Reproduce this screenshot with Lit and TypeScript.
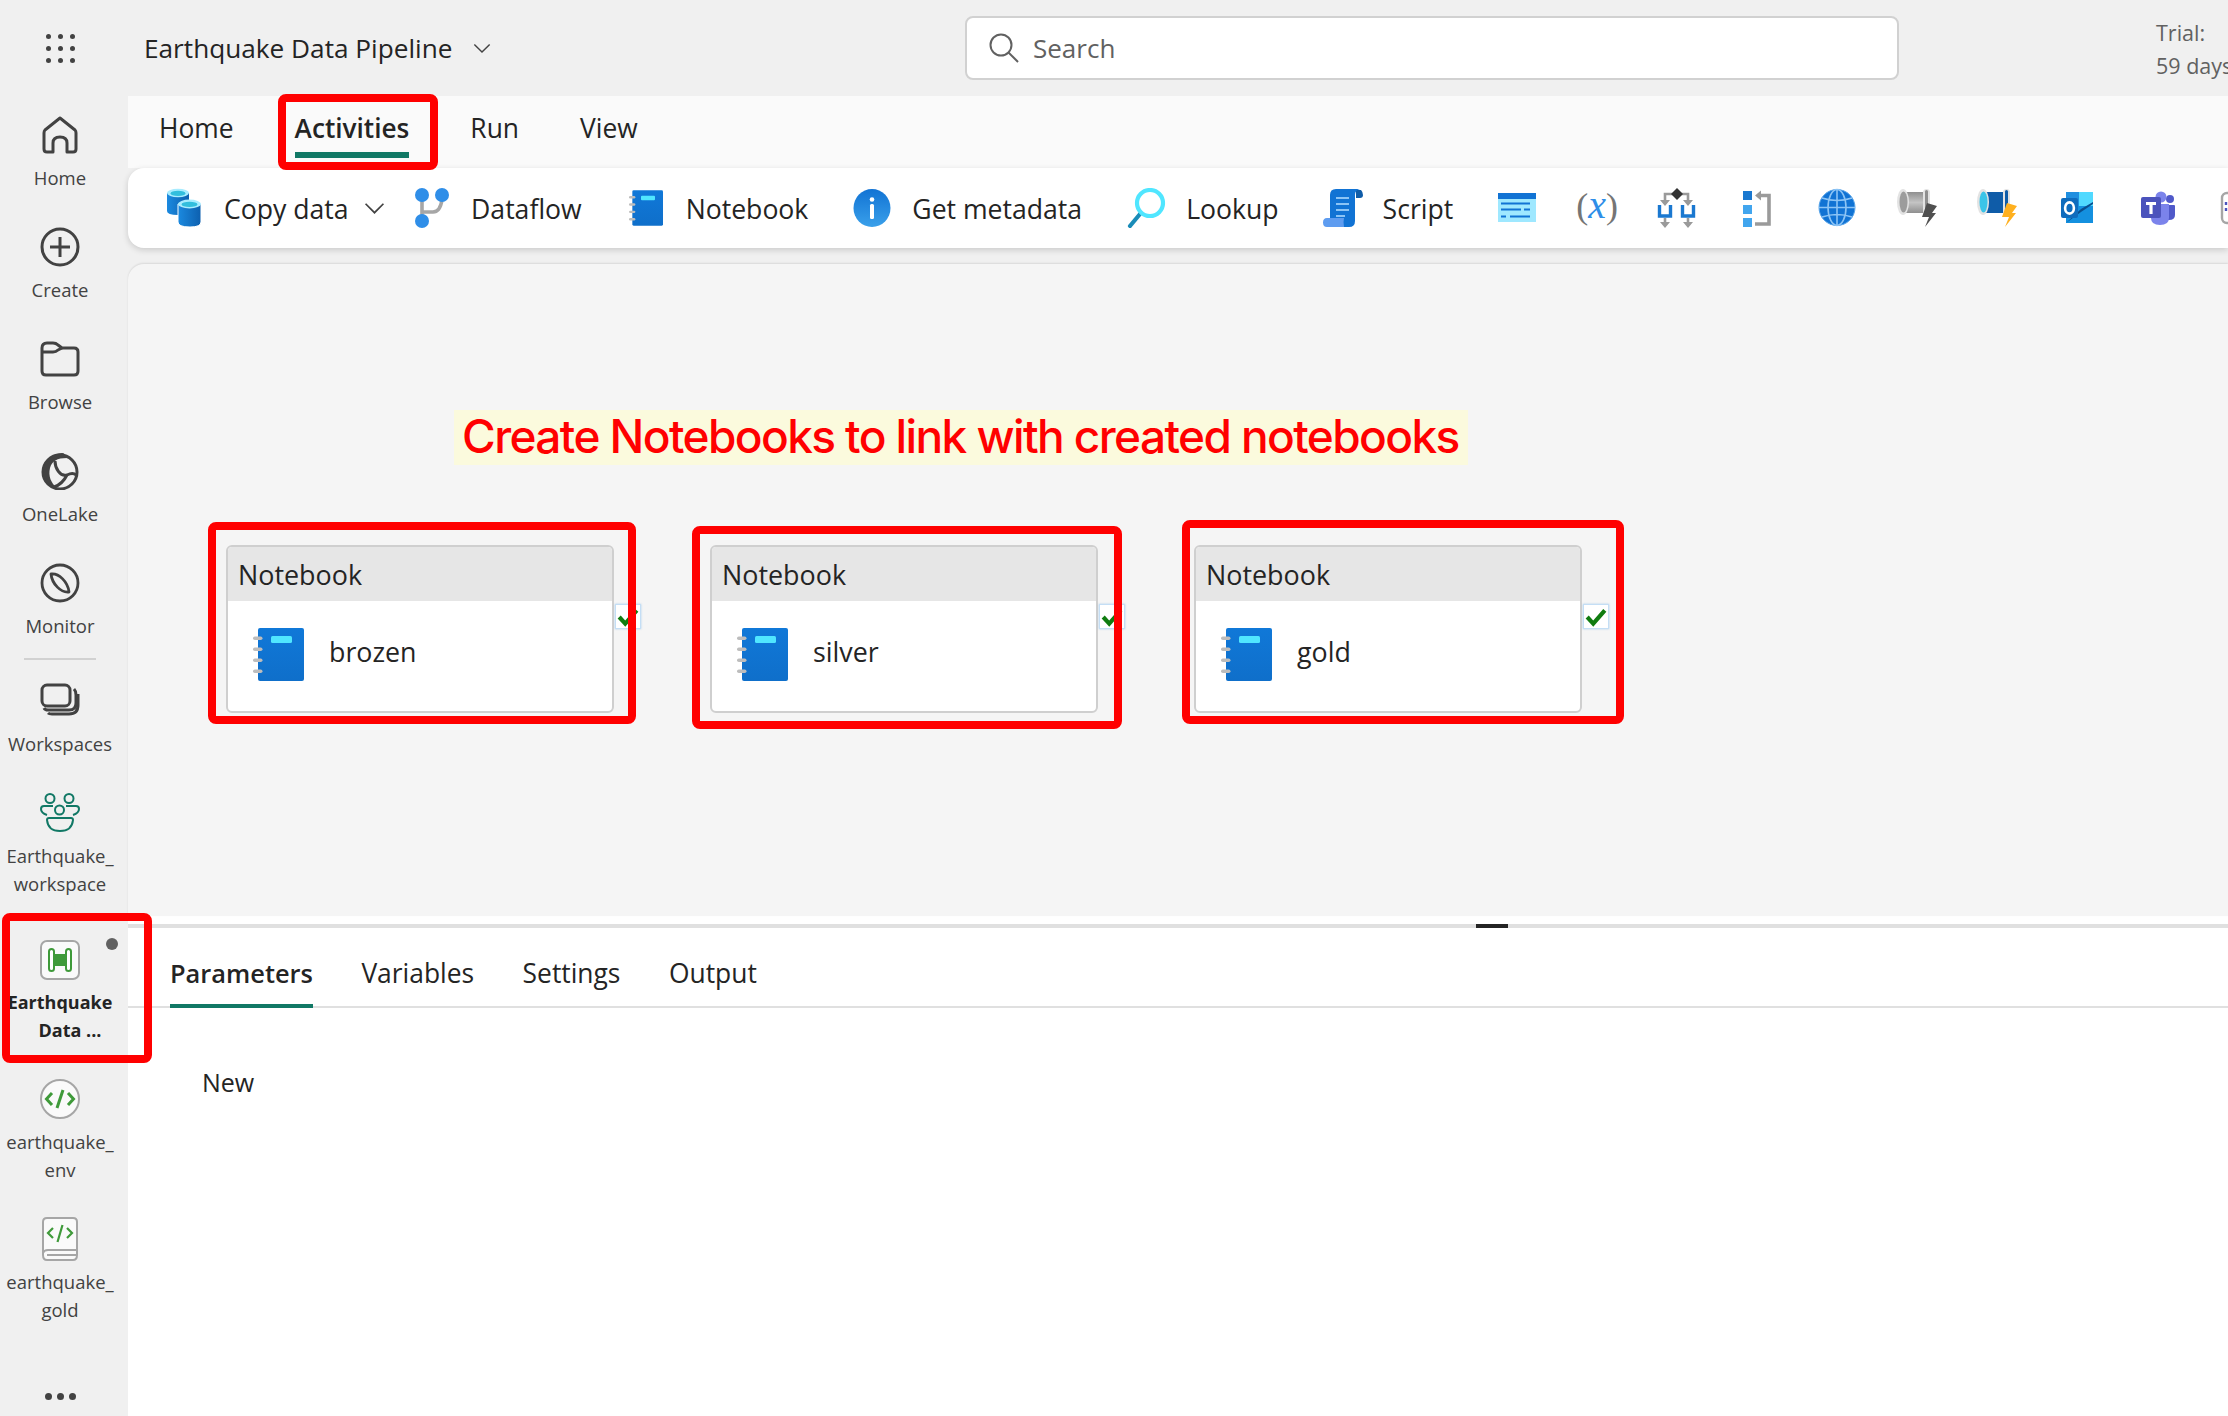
import { css, html, LitElement } from "lit";
import { customElement } from "lit/decorators.js";

// ---- sidebar icons ----
const homeIcon = html`<svg width="36" height="38" viewBox="0 0 36 38" fill="none" stroke="#424242" stroke-width="3" stroke-linejoin="round"><path d="M18 2 L3 14 Q2 15 2 17 V33 Q2 36 5 36 H11 V27 Q11 21 18 21 Q25 21 25 27 V36 H31 Q34 36 34 33 V17 Q34 15 33 14 Z"/></svg>`;
const createIcon = html`<svg width="40" height="40" viewBox="0 0 40 40" fill="none" stroke="#424242" stroke-width="3"><circle cx="20" cy="20" r="18"/><path d="M20 10 V30 M10 20 H30"/></svg>`;
const browseIcon = html`<svg width="40" height="36" viewBox="0 0 40 36" fill="none" stroke="#424242" stroke-width="3" stroke-linejoin="round"><path d="M2 7 Q2 2 7 2 H13 Q16 2 18 4 L22 7 H34 Q38 7 38 11 V30 Q38 34 34 34 H6 Q2 34 2 30 Z"/><path d="M2 11 H13 Q16 11 18 9 L22 7"/></svg>`;
const lakeIcon = html`<svg width="40" height="38" viewBox="0 0 40 38" fill="none" stroke="#424242" stroke-width="3"><circle cx="20" cy="20" r="17"/><path d="M22 1 C12 1 4 10 3 20 C3 29 9 35 17 36 C11 31 8 24 10 16 C12 9 17 6 27 6 C26 3 24 1 22 1 Z" fill="#424242" stroke="none"/><path d="M15 9 C15 16 20 25 27 23 C31 21 34 21 36 23 M14 35 C20 33 24 29 27 23"/></svg>`;
const monitorIcon = html`<svg width="40" height="40" viewBox="0 0 40 40" fill="none" stroke="#424242" stroke-width="2.8" stroke-linejoin="round"><circle cx="20" cy="20" r="18"/><path d="M11 11 C19 10 28 19 29 29 C21 30 12 21 11 11 Z"/></svg>`;
const workspacesIcon = html`<svg width="40" height="36" viewBox="0 0 40 36" fill="none" stroke="#424242" stroke-width="3"><rect x="2" y="2" width="28" height="21" rx="5"/><path d="M34 6 Q36 8 36 12 V20 Q36 27 29 27 H8 Q5 27 4 25"/><path d="M38 11 V22 Q38 31 29 31 H12 Q9 31 8 30"/></svg>`;
const peopleIcon = html`<svg width="40" height="40" viewBox="0 0 40 40" fill="none" stroke="#117865" stroke-width="2"><circle cx="10" cy="5.5" r="4.5"/><circle cx="29" cy="5.5" r="4.5"/><circle cx="19.5" cy="17" r="4.5"/><path d="M13 13 H4 Q1 13 1 16 Q1 20 7 22 M26 13 H36 Q39 13 39 16 Q39 20 33 22"/><path d="M9 25 H31 Q33 25 33 27 Q32 38 20 38 Q8 38 7 27 Q7 25 9 25 Z"/></svg>`;
const pipelineIcon = html`<svg width="40" height="40" viewBox="0 0 40 40"><rect x="1" y="1" width="38" height="38" rx="6" fill="#fafafa" stroke="#a6a6a6" stroke-width="2"/><rect x="11" y="14" width="18" height="12" fill="#3f9a3a"/><rect x="9" y="9" width="5" height="22" rx="2.5" fill="#fff" stroke="#3f9a3a" stroke-width="2"/><rect x="26" y="9" width="5" height="22" rx="2.5" fill="#fff" stroke="#3f9a3a" stroke-width="2"/></svg>`;
const envIcon = html`<svg width="40" height="40" viewBox="0 0 40 40" fill="none"><ellipse cx="20" cy="20" rx="19" ry="19" fill="#fafafa" stroke="#a6a6a6" stroke-width="2"/><path d="M12 14 L6.5 20 L12 26 M28 14 L33.5 20 L28 26 M23 11 L17 29" stroke="#3f9a3a" stroke-width="3"/></svg>`;
const bookIcon = html`<svg width="36" height="44" viewBox="0 0 36 44" fill="none"><path d="M1 38 V5 Q1 1 5 1 H31 Q35 1 35 5 V38 Q35 43 31 43 H5 Q1 43 1 38 Z" fill="#fafafa" stroke="#a6a6a6" stroke-width="2"/><path d="M1 36 Q2 33 6 33 H35 M5 38 H34" stroke="#a6a6a6" stroke-width="2"/><path d="M11 11 L6 16 L11 21 M25 11 L30 16 L25 21 M20.5 8 L15.5 25" stroke="#3f9a3a" stroke-width="2.2"/></svg>`;

// ---- toolbar icons, each in a 40x40 slot ----
const copyIcon = html`<svg width="40" height="40" viewBox="0 0 40 40"><defs><linearGradient id="cy" x1="0" x2="1" y1="0" y2="0"><stop offset="0" stop-color="#1b8ae0"/><stop offset="1" stop-color="#0d5fae"/></linearGradient></defs><path d="M3 5 V23 Q3 27 14 27 Q25 27 25 23 V5 Z" fill="url(#cy)"/><ellipse cx="14" cy="5" rx="11" ry="4.2" fill="#a8ecff"/><ellipse cx="14" cy="5.4" rx="7.5" ry="2.6" fill="#32bedd"/><path d="M14 16 V34 Q14 39 26 39 Q37 39 37 34 V16 Z" fill="url(#cy)" stroke="#fff" stroke-width="1"/><ellipse cx="25.5" cy="16" rx="11.5" ry="4.4" fill="#a8ecff"/><ellipse cx="25.5" cy="16.4" rx="8" ry="2.7" fill="#32bedd"/></svg>`;
const flowIcon = html`<svg width="40" height="40" viewBox="0 0 40 40"><path d="M11 10 V30 M11 24 H22 Q29 24 31 12" fill="none" stroke="#a6a6a6" stroke-width="3.6"/><ellipse cx="11" cy="7" rx="7" ry="7" fill="#2f8ee8"/><ellipse cx="31" cy="7" rx="7" ry="7" fill="#2f8ee8"/><ellipse cx="11" cy="33" rx="7" ry="7" fill="#2f8ee8"/></svg>`;
const notebookIcon = (w: number, h: number) => html`<svg width=${w} height=${h} viewBox="0 0 51 53"><defs><linearGradient id="nb" x1="0" x2="0" y1="0" y2="1"><stop offset="0" stop-color="#1078d8"/><stop offset="1" stop-color="#0f6fca"/></linearGradient></defs><rect x="5" y="0" width="46" height="53" rx="2" fill="url(#nb)"/><rect x="18" y="8" width="21" height="7" rx="1.5" fill="#50e6ff"/><g fill="#bdbdbd"><rect x="0" y="8.5" width="9.5" height="3.6" rx="1.8"/><rect x="0" y="19.5" width="9.5" height="3.6" rx="1.8"/><rect x="0" y="30.5" width="9.5" height="3.6" rx="1.8"/><rect x="0" y="41.5" width="9.5" height="3.6" rx="1.8"/></g></svg>`;
const infoIcon = html`<svg width="40" height="40" viewBox="0 0 40 40"><defs><linearGradient id="inf" x1="0" x2="0" y1="0" y2="1"><stop offset="0" stop-color="#1173d4"/><stop offset="1" stop-color="#3aa0ea"/></linearGradient></defs><ellipse cx="20" cy="20" rx="18.5" ry="19" fill="url(#inf)"/><circle cx="20" cy="11.5" r="2.3" fill="#fff"/><rect x="18" y="16" width="4" height="15" rx="1.5" fill="#fff"/></svg>`;
const lookupIcon = html`<svg width="40" height="40" viewBox="0 0 40 40" fill="none"><path d="M14 26 L4 38" stroke="#1a8cb8" stroke-width="4.2" stroke-linecap="round"/><circle cx="24" cy="15" r="13" stroke="#50e6ff" stroke-width="4.2"/></svg>`;
const scriptIcon = html`<svg width="40" height="40" viewBox="0 0 40 40"><path d="M33 2 H38 Q40 4 40 7 Q40 10 37 10 H33 Z" fill="#0f5ca8"/><path d="M13 1 H37 Q32 2 32 7 V33 Q32 39 26 39 H7 V7 Q7 1 13 1 Z" fill="#1173d4"/><path d="M13 10 H26 M13 16 H26 M13 22 H26 M13 28 H22" stroke="#8cc4f5" stroke-width="1.8"/><path d="M4 30 H21 Q20 34 21 39 H4 Q0 39 0 34.5 Q0 30 4 30 Z" fill="#5e9cf0"/></svg>`;
const listIcon = html`<svg width="40" height="40" viewBox="0 0 40 40"><rect x="1" y="5" width="38" height="29" fill="#9fe8ff"/><rect x="1" y="5" width="38" height="6" fill="#1173d4"/><path d="M4 15.5 H33 M4 21.5 H24 M27 21.5 H33 M4 28.5 H9 M13 28.5 H33" stroke="#1173d4" stroke-width="2.2"/></svg>`;
const ifIcon = html`<svg width="40" height="40" viewBox="0 0 40 40" fill="none"><path d="M8 14 V6 H31 V14 M8 30 V36 M31 30 V36" stroke="#9a9a9a" stroke-width="2.6"/><path d="M3 12 H13 L8 18 Z M26 12 H36 L31 18 Z M3 34 H13 L8 40 Z M26 34 H36 L31 40 Z" fill="#9a9a9a"/><path d="M2.5 17 V28 H13.5 V17 M25.5 17 V28 H36.5 V17" stroke="#1a78d0" stroke-width="3.4"/><path d="M20 0 L26 6 L20 12 L14 6 Z" fill="#333"/></svg>`;
const untilIcon = html`<svg width="40" height="40" viewBox="0 0 40 40" fill="none"><rect x="6" y="3" width="9" height="9" fill="#1a78d0"/><rect x="6" y="17" width="9" height="9" fill="#41a5ee"/><rect x="6" y="30" width="9" height="9" fill="#41a5ee"/><path d="M23 7.5 H32 V36 H18" stroke="#9a9a9a" stroke-width="3.6"/><path d="M18 7.5 L24 2.5 V12.5 Z" fill="#9a9a9a"/></svg>`;
const globeIcon = html`<svg width="40" height="40" viewBox="0 0 40 40" fill="none"><circle cx="20" cy="19.5" r="18" fill="#1173d4" stroke="#5aa6ea" stroke-width="1"/><g stroke="#8cc4f5" stroke-width="1.6"><path d="M20 1.5 V37.5 M2 19.5 H38 M5 10 Q20 15 35 10 M5 29 Q20 24 35 29"/><ellipse cx="20" cy="19.5" rx="9" ry="18"/></g></svg>`;
const pipe = (dark: string, light: string, left: string, flange: string, bolt: string) => html`<svg width="40" height="40" viewBox="0 0 40 40"><defs><linearGradient id=${"p" + bolt.slice(1)} x1="0" x2="0" y1="0" y2="1"><stop offset="0" stop-color=${dark}/><stop offset="0.5" stop-color=${light}/><stop offset="1" stop-color=${dark}/></linearGradient></defs><rect x="6" y="4" width="24" height="21" fill=${"url(#p" + bolt.slice(1) + ")"}/><ellipse cx="6" cy="14" rx="6" ry="13" fill=${flange}/><ellipse cx="6.5" cy="14" rx="4" ry="10.5" fill=${left}/><rect x="26" y="1" width="7" height="27" rx="3.5" fill=${flange}/><rect x="28" y="2" width="3" height="25" rx="1.5" fill=${dark}/><path d="M30 15 L40 18 L35 25 L39 25 L28 39 L32 29 L25 29 Z" fill=${bolt}/></svg>`;
const grayPipe = pipe("#8f8f8f", "#c4c4c4", "#9c9c9c", "#e3e3e3", "#505050");
const bluePipe = pipe("#0f5ca8", "#0f5ca8", "#3bc4e8", "#e3e3e3", "#ffb01f");
const outlookIcon = html`<svg width="40" height="40" viewBox="0 0 40 40"><rect x="9" y="4" width="27" height="31" fill="#1490df"/><rect x="22" y="4" width="14" height="14" fill="#50d9ff"/><rect x="9" y="4" width="13" height="14" fill="#1f8fe0"/><path d="M9 35 L24 21 L36 14 V16 L24 24 Z" fill="#0a4f8f"/><rect x="4" y="10" width="17" height="20" rx="2" fill="#0f6cbd"/><ellipse cx="12.5" cy="20" rx="4.4" ry="5.6" fill="none" stroke="#fff" stroke-width="2.6"/></svg>`;
const teamsIcon = html`<svg width="40" height="40" viewBox="0 0 40 40"><circle cx="33" cy="11" r="4" fill="#5059c9"/><path d="M26 17 H37 Q38 17 38 18 V27 Q38 32 32 32 H26 Z" fill="#5059c9"/><circle cx="24" cy="9" r="5.5" fill="#7b83eb"/><path d="M14 16 H32 V30 Q32 37 23 37 Q14 37 14 30 Z" fill="#7b83eb"/><rect x="4" y="9" width="20" height="21" rx="2" fill="#4b53bc"/><path d="M9 14 H19 V17 H15.6 V26 H12.4 V17 H9 Z" fill="#fff"/></svg>`;
const moreIcon = html`<svg width="40" height="40" viewBox="0 0 40 40" fill="none"><rect x="5" y="5" width="34" height="30" rx="5" stroke="#a6a6a6" stroke-width="2.4"/><path d="M9 14 V26" stroke="#4b53bc" stroke-width="2.4" stroke-dasharray="3 3"/></svg>`;

const chevron = (w: number) => html`<svg class="chev" width=${w} height=${Math.round(w * 0.6)} viewBox="0 0 20 12" fill="none" stroke="#424242" stroke-width="1.6"><path d="M1.5 1.5 L10 10 L18.5 1.5"/></svg>`;
const check = html`<svg width="22" height="20" viewBox="0 0 20 18" fill="none" stroke="#107c10" stroke-width="3.8"><path d="M2 9 L7.5 15 L18 3"/></svg>`;

type NavItem = { icon: unknown; lines: string[]; active?: boolean };

const navTop: NavItem[] = [
  { icon: homeIcon, lines: ["Home"] },
  { icon: createIcon, lines: ["Create"] },
  { icon: browseIcon, lines: ["Browse"] },
  { icon: lakeIcon, lines: ["OneLake"] },
  { icon: monitorIcon, lines: ["Monitor"] },
];
const navBottom: NavItem[] = [
  { icon: workspacesIcon, lines: ["Workspaces"] },
  { icon: peopleIcon, lines: ["Earthquake_", "workspace"] },
  { icon: pipelineIcon, lines: ["Earthquake", "Data ..."], active: true },
  { icon: envIcon, lines: ["earthquake_", "env"] },
  { icon: bookIcon, lines: ["earthquake_", "gold"] },
];

const labelled = [
  { icon: flowIcon, label: "Dataflow" },
  { icon: notebookIcon(34, 36), label: "Notebook" },
  { icon: infoIcon, label: "Get metadata" },
  { icon: lookupIcon, label: "Lookup" },
  { icon: scriptIcon, label: "Script" },
];
const plainIcons = [listIcon, null, ifIcon, untilIcon, globeIcon, grayPipe, bluePipe, outlookIcon, teamsIcon, moreIcon];

const nodes = [
  { name: "brozen", left: 98 },
  { name: "silver", left: 582 },
  { name: "gold", left: 1066 },
];

// red annotation boxes drawn over the screenshot: [left, top, width, height]
const marks = [
  [278, 94, 160, 76],
  [2, 913, 150, 150],
  [208, 522, 428, 202],
  [692, 526, 430, 203],
  [1182, 520, 442, 204],
];

@customElement("app-root")
export class AppRoot extends LitElement {
  static styles = css`
    :host {
      display: block;
      position: relative;
      width: 2228px;
      height: 1416px;
      overflow: hidden;
      background: #f0f0f0;
      font-family: "Open Sans", "Noto Sans", sans-serif;
      color: #242424;
    }
    .shell {
      display: flex;
      height: 100%;
    }

    /* sidebar */
    .side {
      flex: none;
      width: 128px;
      box-sizing: border-box;
      padding-right: 8px;
      display: flex;
      flex-direction: column;
      align-items: center;
      color: #424242;
    }
    .waffle {
      margin-top: 34px;
      margin-bottom: 50px;
      display: grid;
      grid-template-columns: repeat(3, 5px);
      gap: 7px;
    }
    .waffle i {
      width: 5px;
      height: 5px;
      border-radius: 50%;
      background: #424242;
    }
    .nav {
      display: flex;
      flex-direction: column;
      align-items: center;
      gap: 33px;
    }
    .item {
      display: flex;
      flex-direction: column;
      align-items: center;
      width: 120px;
    }
    .item .ic {
      height: 44px;
      display: flex;
      align-items: center;
      justify-content: center;
      margin-bottom: 7px;
    }
    .item .ln {
      font-size: 18.5px;
      line-height: 28px;
      white-space: nowrap;
    }
    .item.active {
      position: relative;
      margin-top: 7px;
      margin-bottom: 0;
      color: #242424;
      font-weight: 700;
    }
    .item.active .ic {
      margin-bottom: 6px;
    }
    .item.active .ln {
      font-size: 18px;
    }
    .item.active .ln + .ln {
      margin-left: 20px;
    }
    .dot {
      position: absolute;
      top: 0;
      left: 106px;
      width: 12px;
      height: 12px;
      border-radius: 50%;
      background: #616161;
    }
    .sep {
      width: 72px;
      height: 2px;
      background: #d1d1d1;
      margin: 18px 0 19px;
    }
    .more {
      margin-top: 69px;
      display: flex;
      gap: 5px;
    }
    .more i {
      width: 7px;
      height: 7px;
      border-radius: 50%;
      background: #424242;
    }

    /* main column */
    .main {
      flex: 1;
      min-width: 0;
      display: flex;
      flex-direction: column;
    }
    .top {
      height: 96px;
      flex: none;
      display: flex;
      align-items: center;
    }
    .title {
      flex: none;
      width: 837px;
      box-sizing: border-box;
      padding-left: 16px;
      display: flex;
      align-items: center;
      gap: 21px;
      font-size: 26.2px;
    }
    .search {
      flex: none;
      width: 934px;
      height: 64px;
      box-sizing: border-box;
      background: #fff;
      border: 2px solid #d1d1d1;
      border-radius: 8px;
      display: flex;
      align-items: center;
      gap: 14px;
      padding-left: 22px;
      font-size: 26px;
      color: #616161;
    }
    .trial {
      flex: none;
      margin-left: 257px;
      margin-top: 2px;
      font-size: 21.5px;
      line-height: 33px;
      white-space: nowrap;
      color: #616161;
    }

    .tabs {
      height: 72px;
      flex: none;
      background: #fafafa;
      display: flex;
      gap: 61px;
      padding-left: 31px;
      font-size: 26.4px;
    }
    .tab {
      display: flex;
      align-items: center;
      height: 62px;
      box-sizing: border-box;
      padding-top: 8px;
      border-bottom: 6px solid transparent;
    }
    .tab.on {
      font-weight: 600;
      border-bottom-color: #117865;
      font-size: 26.2px;
    }

    .tools {
      height: 80px;
      flex: none;
      background: #fff;
      border-radius: 16px 0 0 16px;
      box-shadow: 0 2px 6px rgba(0, 0, 0, 0.16);
      display: flex;
      align-items: center;
      padding-left: 36px;
      gap: 44px;
      font-size: 26.6px;
      white-space: nowrap;
      overflow: hidden;
      position: relative;
    }
    .tool {
      flex: none;
      display: flex;
      align-items: center;
      gap: 20px;
    }
    .tool .label {
      padding-top: 2px;
    }
    .slot {
      flex: none;
      width: 40px;
      height: 40px;
      display: flex;
      align-items: center;
      justify-content: center;
    }
    .copy {
      margin-right: -17.5px;
    }
    .copy .chev {
      margin-left: -5px;
    }
    .plain {
      display: flex;
      gap: 40px;
      flex: none;
    }
    .fx {
      font-family: "Liberation Serif", serif;
      font-size: 36px;
      color: #757575;
      line-height: 40px;
      padding-bottom: 6px;
      white-space: nowrap;
    }
    .fx i {
      color: #2f8ee8;
      font-size: 40px;
    }

    .canvas {
      flex: none;
      position: relative;
      height: 652px;
      margin-top: 16px;
      background: #f5f5f5;
      border-radius: 16px 0 0 0;
      box-shadow: 0 -1px 2px rgba(0, 0, 0, 0.1);
    }
    .note {
      position: absolute;
      left: 326px;
      top: 146px;
      width: 1014px;
      height: 55px;
      box-sizing: border-box;
      padding-left: 8px;
      background: #fbfadd;
      color: #ff0000;
      font-family: Inter, "Liberation Sans", sans-serif;
      font-size: 46px;
      font-weight: 500;
      line-height: 53px;
      letter-spacing: -1.6px;
      white-space: nowrap;
    }
    .node {
      position: absolute;
      top: 281px;
      width: 388px;
      height: 168px;
      box-sizing: border-box;
      background: #fff;
      border: 2px solid #cfcfcf;
      border-radius: 6px;
    }
    .node .hd {
      height: 54px;
      background: #e6e6e6;
      border-radius: 4px 4px 0 0;
      display: flex;
      align-items: center;
      padding-left: 10px;
      font-size: 26.9px;
    }
    .node .bd {
      display: flex;
      align-items: flex-start;
      gap: 25px;
      padding: 27px 0 0 24px;
      font-size: 26.8px;
    }
    .node .bd svg {
      margin-left: 1px;
    }
    .node .bd span {
      line-height: 48px;
    }
    .ok {
      position: absolute;
      left: 387px;
      top: 57px;
      width: 26px;
      height: 25px;
      box-sizing: border-box;
      background: #fff;
      border: 1px solid #c4def5;
      box-shadow: 0 0 2px rgba(0, 120, 212, 0.3);
      display: flex;
      align-items: center;
      justify-content: center;
    }

    /* bottom panel */
    .panel {
      flex: 1;
      background: #fff;
      padding-top: 8px;
    }
    .split {
      height: 4px;
      background: #e0e0e0;
    }
    .split i {
      display: block;
      width: 32px;
      height: 4px;
      background: #242424;
      margin-left: 1348px;
    }
    .ptabs {
      height: 80px;
      box-sizing: border-box;
      border-bottom: 2px solid #e0e0e0;
      display: flex;
      gap: 48.5px;
      padding-left: 42px;
      font-size: 26.4px;
    }
    .ptab {
      height: 80px;
      box-sizing: border-box;
      padding-top: 23px;
      line-height: 44px;
      border-bottom: 4px solid transparent;
    }
    .ptab.on {
      font-weight: 600;
      border-bottom-color: #117865;
      font-size: 25.4px;
    }
    .new {
      padding: 54px 0 0 74px;
      font-size: 25px;
      line-height: 40px;
    }

    .mark {
      position: absolute;
      box-sizing: border-box;
      border: 8px solid #ff0000;
      border-radius: 8px;
      pointer-events: none;
    }
  `;

  renderNav(items: NavItem[]) {
    return items.map(
      (n) => html`<div class="item ${n.active ? "active" : ""}">
        ${n.active ? html`<span class="dot"></span>` : ""}
        <div class="ic">${n.icon}</div>
        ${n.lines.map((l) => html`<div class="ln">${l}</div>`)}
      </div>`
    );
  }

  render() {
    return html`
      <div class="shell">
        <aside class="side">
          <div class="waffle">${Array.from({ length: 9 }, () => html`<i></i>`)}</div>
          <div class="nav">${this.renderNav(navTop)}</div>
          <div class="sep"></div>
          <div class="nav">${this.renderNav(navBottom)}</div>
          <div class="more"><i></i><i></i><i></i></div>
        </aside>

        <div class="main">
          <header class="top">
            <div class="title"><span>Earthquake Data Pipeline</span>${chevron(18)}</div>
            <div class="search">
              <svg width="30" height="30" viewBox="0 0 30 30" fill="none" stroke="#616161" stroke-width="2"><circle cx="12" cy="12" r="10.5"/><path d="M19.5 19.5 L29 29"/></svg>
              <span>Search</span>
            </div>
            <div class="trial">Trial:<br />59 days left</div>
          </header>

          <nav class="tabs">
            <div class="tab">Home</div>
            <div class="tab on">Activities</div>
            <div class="tab">Run</div>
            <div class="tab">View</div>
          </nav>

          <div class="tools">
            <div class="tool copy">
              <span class="slot">${copyIcon}</span>
              <span class="label">Copy data</span>
              ${chevron(21)}
            </div>
            ${labelled.map(
              (t) => html`<div class="tool"><span class="slot">${t.icon}</span><span class="label">${t.label}</span></div>`
            )}
            <div class="plain">
              ${plainIcons.map(
                (ic) => html`<span class="slot">${ic ?? html`<span class="fx">(<i>x</i>)</span>`}</span>`
              )}
            </div>
          </div>

          <section class="canvas">
            <div class="note">Create Notebooks to link with created notebooks</div>
            ${nodes.map(
              (n) => html`<div class="node" style="left:${n.left}px">
                <div class="hd">Notebook</div>
                <div class="bd">${notebookIcon(51, 53)}<span>${n.name}</span></div>
                <div class="ok">${check}</div>
              </div>`
            )}
          </section>

          <section class="panel">
            <div class="split"><i></i></div>
            <div class="ptabs">
              <div class="ptab on">Parameters</div>
              <div class="ptab">Variables</div>
              <div class="ptab">Settings</div>
              <div class="ptab">Output</div>
            </div>
            <div class="new">New</div>
          </section>
        </div>
      </div>
      ${marks.map(
        ([l, t, w, h]) => html`<div class="mark" style="left:${l}px;top:${t}px;width:${w}px;height:${h}px"></div>`
      )}
    `;
  }
}
